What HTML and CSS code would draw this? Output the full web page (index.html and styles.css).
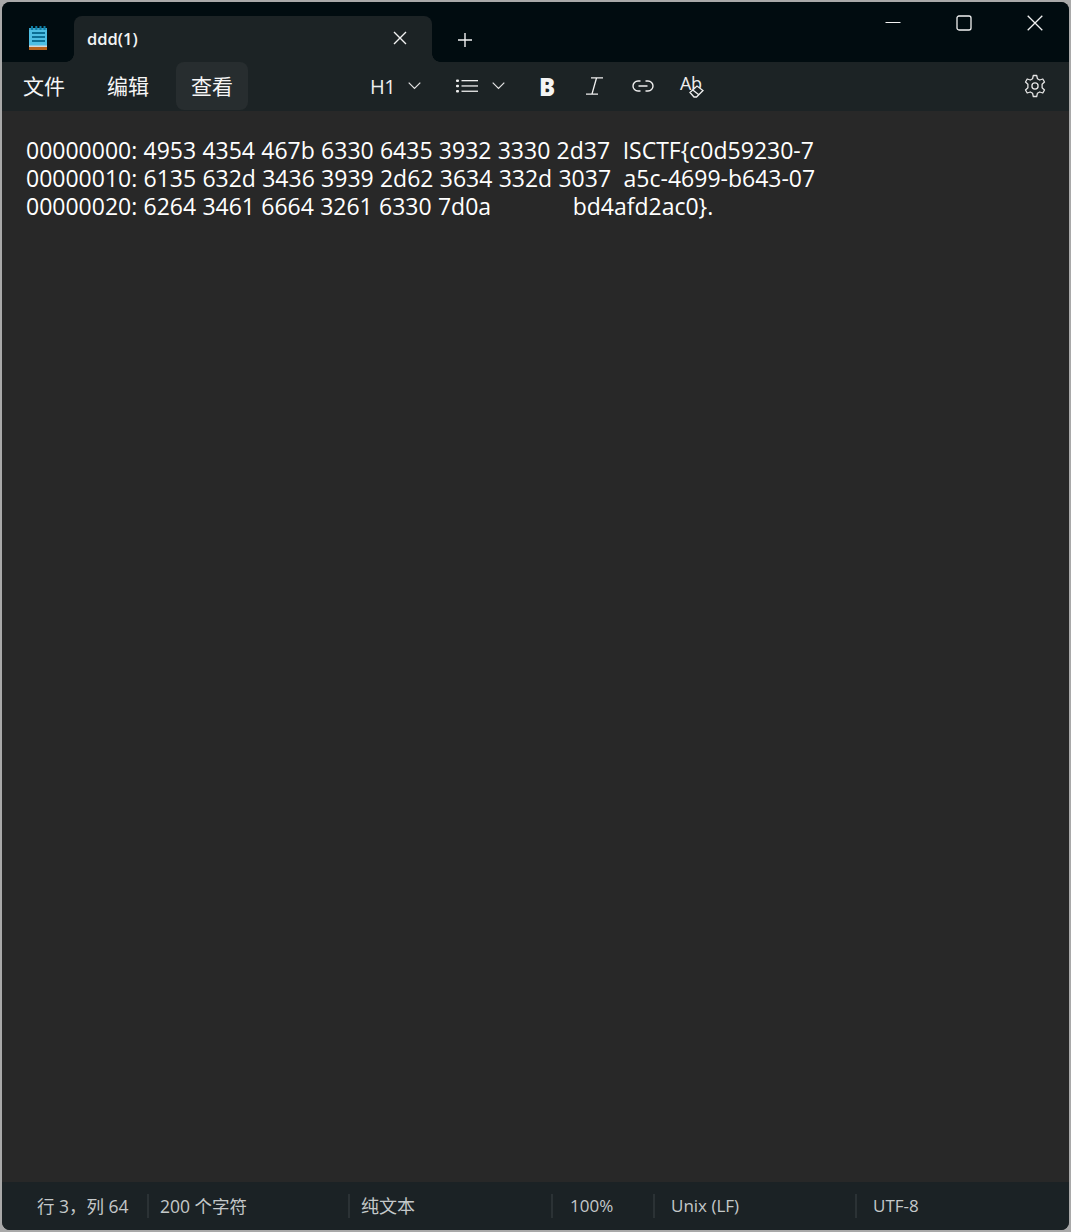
FILE: index.html
```html
<!DOCTYPE html>
<html lang="zh-CN">
<head>
<meta charset="utf-8">
<title>ddd(1) - Notepad</title>
<link rel="stylesheet" href="styles.css">
</head>
<body>
<div class="window">
  <header class="titlebar">
    <div class="app-icon">
      <svg width="20" height="24" viewBox="0 0 20 24">
        <rect x="1" y="2" width="18" height="20" fill="#4fbfe3"/>
        <rect x="1" y="2" width="18" height="2" fill="#3aa5cc"/>
        <rect x="3" y="0" width="2" height="4" fill="#0e7fa6"/>
        <rect x="7.300" y="0" width="2" height="4" fill="#0e7fa6"/>
        <rect x="11.500" y="0" width="2" height="4" fill="#0e7fa6"/>
        <rect x="15.500" y="0" width="2" height="4" fill="#0e7fa6"/>
        <rect x="4" y="6" width="13" height="2" fill="#0c6f94"/>
        <rect x="4" y="10" width="13" height="2" fill="#0c6f94"/>
        <rect x="4" y="14" width="13" height="2" fill="#0c6f94"/>
        <rect x="1" y="19.500" width="18" height="1.500" fill="#cfd8dc"/>
        <rect x="1" y="21" width="18" height="3" fill="#b8621b"/>
      </svg>
    </div>
    <div class="tab">
      <span class="tab-title">ddd(1)</span>
      <svg class="tab-close" width="16" height="16" viewBox="0 0 16 16"><path d="M2 2 L14 14 M14 2 L2 14" stroke="#f2f2f2" stroke-width="1.400" fill="none"/></svg>
    </div>
    <svg class="tab-add" width="16" height="16" viewBox="0 0 16 16"><path d="M8 1 V15 M1 8 H15" stroke="#f2f2f2" stroke-width="1.400" fill="none"/></svg>
    <div class="win-controls">
      <svg width="16" height="16" viewBox="0 0 16 16"><path d="M0.500 7.500 H15.500" stroke="#f2f2f2" stroke-width="1.200" fill="none"/></svg>
      <svg width="16" height="16" viewBox="0 0 16 16"><rect x="1" y="1" width="14" height="14" rx="2" stroke="#f2f2f2" stroke-width="1.300" fill="none"/></svg>
      <svg width="16" height="16" viewBox="0 0 16 16"><path d="M0.700 0.700 L15.300 15.300 M15.300 0.700 L0.700 15.300" stroke="#f2f2f2" stroke-width="1.300" fill="none"/></svg>
    </div>
  </header>

  <nav class="toolbar">
    <div class="menu">
      <span class="menu-item">文件</span>
      <span class="menu-item">编辑</span>
      <span class="menu-item menu-item-active">查看</span>
    </div>
    <div class="tools">
      <span class="tool-h1">H1</span>
      <svg class="chev chev-h1" width="13" height="8" viewBox="0 0 13 8"><path d="M0.700 0.700 L6.500 6.500 L12.300 0.700" stroke="#e4e4e4" stroke-width="1.200" fill="none"/></svg>
      <svg class="tool-list" width="22" height="14" viewBox="0 0 22 14"><g fill="#eeeeee"><rect x="0" y="0.500" width="3" height="2.500" rx="1"/><rect x="0" y="5.700" width="3" height="2.500" rx="1"/><rect x="0" y="11" width="3" height="2.500" rx="1"/><rect x="5.500" y="1" width="16.500" height="1.300"/><rect x="5.500" y="6.300" width="16.500" height="1.300"/><rect x="5.500" y="11.600" width="16.500" height="1.300"/></g></svg>
      <svg class="chev chev-list" width="13" height="8" viewBox="0 0 13 8"><path d="M0.700 0.700 L6.500 6.500 L12.300 0.700" stroke="#e4e4e4" stroke-width="1.200" fill="none"/></svg>
      <span class="tool-b">B</span>
      <svg class="tool-i" width="17" height="18" viewBox="0 0 17 18"><path d="M5 0.800 H17 M0 17.200 H12 M10.500 1 L6 17" stroke="#eeeeee" stroke-width="1.300" fill="none"/></svg>
      <svg class="tool-link" width="22" height="12" viewBox="0 0 22 12"><path d="M8.500 1 H6 A5 5 0 0 0 6 11 H8.500 M13.500 1 H16 A5 5 0 0 1 16 11 H13.500 M6.500 6 H15.500" stroke="#eeeeee" stroke-width="1.400" fill="none"/></svg>
      <span class="tool-ab"><span class="tool-ab-text">Ab</span><svg class="tool-ab-eraser" width="15" height="13" viewBox="0 0 15 13"><path d="M1 7.500 L8 1 L14 5.500 L7.500 12 H5 Z M3.800 5 L9.500 9.500" stroke="#eeeeee" stroke-width="1.300" fill="#1c2325"/></svg></span>
    </div>
    <svg class="gear" width="24" height="24" viewBox="0 0 24 24"><path d="M10.300 1.500 H13.700 L14.400 4.700 L16.700 6 L19.800 5 L21.500 8 L19.100 10.200 V13.800 L21.500 16 L19.800 19 L16.700 18 L14.400 19.300 L13.700 22.500 H10.300 L9.600 19.300 L7.300 18 L4.200 19 L2.500 16 L4.900 13.800 V10.200 L2.500 8 L4.200 5 L7.300 6 L9.600 4.700 Z" stroke="#e4e4e4" stroke-width="1.300" stroke-linejoin="round" fill="none"/><circle cx="12" cy="12" r="3.100" stroke="#e4e4e4" stroke-width="1.300" fill="none"/></svg>
  </nav>

  <main class="editor">
<pre class="content">00000000: 4953 4354 467b 6330 6435 3932 3330 2d37  ISCTF{c0d59230-7
00000010: 6135 632d 3436 3939 2d62 3634 332d 3037  a5c-4699-b643-07
00000020: 6264 3461 6664 3261 6330 7d0a             bd4afd2ac0}.</pre>
  </main>

  <footer class="statusbar">
    <span class="cell cell-pos">行 3，列 64</span>
    <span class="cell cell-chars">200 个字符</span>
    <span class="cell cell-type">纯文本</span>
    <span class="cell cell-zoom">100%</span>
    <span class="cell cell-eol">Unix (LF)</span>
    <span class="cell cell-enc">UTF-8</span>
  </footer>
</div>
</body>
</html>
```

FILE: styles.css
```css
* { box-sizing: border-box; }
html, body { margin: 0; height: 100%; }
body {
  background: #a9a9a9;
  padding: 2px;
  font-family: "Open Sans", "Noto Sans CJK SC", sans-serif;
  color: #fff;
  overflow: hidden;
}
.window {
  height: 1228px;
  border-radius: 8px;
  overflow: hidden;
  display: flex;
  flex-direction: column;
  background: #282828;
}
.titlebar {
  height: 60px;
  flex: none;
  background: #010c10;
  display: flex;
  align-items: flex-start;
}
.app-icon {
  width: 72px;
  height: 60px;
  padding: 24px 0 0 26px;
  flex: none;
}
.app-icon svg { display: block; }
.tab {
  position: relative;
  width: 358px;
  height: 46px;
  margin-top: 14px;
  flex: none;
  background: #1c2325;
  border-radius: 8px 8px 0 0;
  display: flex;
  align-items: center;
  justify-content: space-between;
  padding: 0 24px 2px 13px;
}
.tab::before, .tab::after {
  content: "";
  position: absolute;
  bottom: 0;
  width: 8px;
  height: 8px;
}
.tab::before { left: -8px; background: radial-gradient(circle at 0 0, #010c10 7.500px, #1c2325 8px); }
.tab::after { right: -8px; background: radial-gradient(circle at 100% 0, #010c10 7.500px, #1c2325 8px); }
.tab-title { font-size: 16.500px; font-weight: 600; color: #f4f4f4; }
.tab-add { margin: 30px 0 0 25px; flex: none; }
.win-controls {
  margin-left: auto;
  display: flex;
  gap: 55px;
  padding: 13px 26px 0 0;
}
.toolbar {
  height: 49px;
  flex: none;
  background: #1c2325;
  display: flex;
  align-items: flex-start;
}
.menu { display: flex; gap: 12px; padding-left: 6px; flex: none; }
.menu-item {
  width: 72px;
  height: 48px;
  border-radius: 8px;
  font-family: "Noto Sans CJK SC", sans-serif;
  font-size: 21px;
  line-height: 47px;
  text-align: center;
  color: #f6f6f6;
}
.menu-item-active { background: #272d2f; }
.tools {
  display: flex;
  align-items: center;
  height: 48px;
  margin-left: 123px;
}
.tool-h1 { font-size: 20px; font-weight: 400; color: #eee; width: 24px; letter-spacing: -.5px; margin-left: -1px; }
.chev-h1 { margin-left: 14px; }
.tool-list { margin-left: 35px; }
.chev-list { margin-left: 14px; }
.tool-b { margin-left: 34px; font-size: 24px; font-weight: 800; color: #f4f4f4; width: 15px; }
.tool-i { margin-left: 32px; }
.tool-link { margin-left: 29px; }
.tool-ab { position: relative; margin-left: 26px; width: 24px; height: 24px; display: block; }
.tool-ab-text { font-size: 18px; line-height: 18px; color: #eee; font-weight: 400; display: block; letter-spacing: -.5px; }
.tool-ab-eraser { position: absolute; right: 0; bottom: 0; }
.gear { margin: 12px 22px 0 auto; flex: none; }
.editor { flex: 1; padding: 25px 0 0 24px; }
.content {
  margin: 0;
  font-family: "Open Sans", sans-serif;
  font-size: 23px;
  line-height: 28px;
  word-spacing: .3px;
  color: #fff;
}
.statusbar {
  height: 48px;
  flex: none;
  background: #1b2225;
  display: flex;
  align-items: center;
  font-size: 17px;
  color: #c4c8c9;
}
.cell {
  height: 24px;
  line-height: 24px;
  border-left: 2px solid #2b3235;
  white-space: nowrap;
  font-family: "Open Sans", "Noto Sans CJK SC", sans-serif;
  flex: none;
}
.cell-pos { width: 145px; padding-left: 33px; border-left-color: transparent; font-size: 17.500px; }
.cell-chars { width: 201px; padding-left: 11px; font-size: 17.500px; }
.cell-type { width: 203px; padding-left: 11px; font-size: 18px; }
.cell-zoom { width: 102px; padding-left: 17px; }
.cell-eol { width: 202px; padding-left: 16px; }
.cell-enc { width: 150px; padding-left: 16px; }
```
